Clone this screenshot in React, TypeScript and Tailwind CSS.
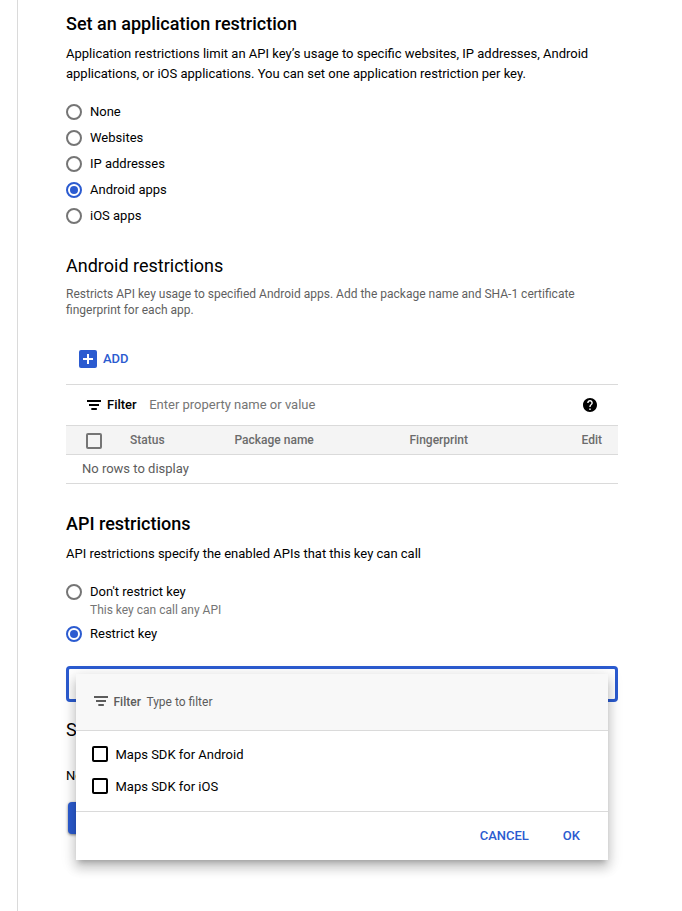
import React from 'react';

function Radio({ label, checked = false }: { label: string; checked?: boolean }) {
  return (
    <label className="flex h-[26px] items-center">
      <span
        className={
          checked
            ? 'flex h-4 w-4 items-center justify-center rounded-full border-2 border-[#2b5bd0]'
            : 'h-4 w-4 rounded-full border-2 border-[#757575]'
        }
      >
        {checked && <span className="h-2 w-2 rounded-full bg-[#2b5bd0]" />}
      </span>
      <span className="ml-2 text-[13px] leading-5">{label}</span>
    </label>
  );
}

function FilterIcon({ className }: { className: string }) {
  return (
    <svg viewBox="0 0 14 10" className={className} fill="currentColor">
      <rect x="0" y="0" width="14" height="2" />
      <rect x="2" y="4" width="10" height="2" />
      <rect x="4.33" y="8" width="5.5" height="2" />
    </svg>
  );
}

function HelpIcon() {
  return (
    <svg viewBox="2 2 20 20" className="h-3.5 w-3.5" fill="#000">
      <path d="M12 2C6.48 2 2 6.48 2 12s4.48 10 10 10 10-4.48 10-10S17.520 2 12 2zm1 17h-2v-2h2v2zm2.070-7.750-.9.920C13.450 12.900 13 13.500 13 15h-2v-.5c0-1.100.450-2.100 1.170-2.830l1.240-1.260c.370-.360.590-.860.590-1.410 0-1.100-.9-2-2-2s-2 .9-2 2H8c0-2.210 1.790-4 4-4s4 1.790 4 4c0 .880-.360 1.680-.930 2.250z" />
    </svg>
  );
}

function ApiMenu() {
  return (
    <div className="absolute left-[7px] top-[5px] w-[532px] bg-white shadow-[0_5px_5px_-3px_rgba(0,0,0,0.2),0_8px_10px_1px_rgba(0,0,0,0.14),0_3px_14px_2px_rgba(0,0,0,0.12)]">
      <div className="flex h-[57px] items-center border-b border-[#dadada] bg-[#f8f8f8] pl-[18px] text-xs text-[#5c5c5c]">
        <FilterIcon className="mb-0.5 h-2.5 w-3.5" />
        <span className="ml-[5.5px] font-medium">Filter</span>
        <span className="ml-[5.5px]">Type to filter</span>
      </div>
      <div className="flex h-[81px] flex-col border-b border-[#dadada] pt-2">
        {['Maps SDK for Android', 'Maps SDK for iOS'].map((name) => (
          <label key={name} className="flex h-8 items-center pl-4">
            <span className="mb-0.5 h-4 w-4 rounded-[2px] border-2 border-black" />
            <span className="ml-[7.5px] text-[13px] leading-5">{name}</span>
          </label>
        ))}
      </div>
      <div className="flex h-12 items-center justify-end pr-7 text-[13px] font-medium text-[#2b5bd0]">
        <button>CANCEL</button>
        <button className="ml-[34px]">OK</button>
      </div>
    </div>
  );
}

export default function App() {
  return (
    <div className="h-[911px] w-[682px] overflow-hidden bg-white pl-[17px] font-['Roboto',sans-serif] text-black">
      <main className="h-full border-l border-[#dadada] pl-12 pt-3">
        <div className="w-[552px]">
          <h2 className="text-lg font-medium leading-6">Set an application restriction</h2>
          <p className="mt-2 text-[13px] leading-5">
            Application restrictions limit an API key’s usage to specific websites, IP addresses, Android
            <br />
            applications, or iOS applications. You can set one application restriction per key.
          </p>
          <div className="mt-[15px]">
            <Radio label="None" />
            <Radio label="Websites" />
            <Radio label="IP addresses" />
            <Radio label="Android apps" checked />
            <Radio label="iOS apps" />
          </div>

          <h3 className="mt-[25px] text-lg font-normal leading-6">Android restrictions</h3>
          <p className="mt-2 text-xs leading-4 text-[#5f5f5f]">
            Restricts API key usage to specified Android apps. Add the package name and SHA-1 certificate
            <br />
            fingerprint for each app.
          </p>
          <button className="ml-[13px] mt-8 flex h-[18px] items-center text-[#2b5bd0]">
            <svg viewBox="0 0 18 18" className="h-[18px] w-[18px]">
              <rect width="18" height="18" rx="2" fill="#2b5bd0" />
              <path d="M4 9h10M9 4v10" stroke="#fff" strokeWidth="2" />
            </svg>
            <span className="ml-1.5 text-[13px] font-medium">ADD</span>
          </button>

          <section className="mt-4 border-b border-t border-[#dadada]">
            <div className="flex h-10 items-center pl-[21px] pr-[21px] text-[13px]">
              <FilterIcon className="h-2.5 w-3.5" />
              <span className="ml-1.5 font-medium">Filter</span>
              <span className="ml-[12.5px] flex-1 text-[#757575]">Enter property name or value</span>
              <HelpIcon />
            </div>
            <div className="flex h-[30px] items-center border-b border-t border-[#dadada] bg-[#f4f4f4] pl-5 text-xs font-medium text-[#6b6b6b]">
              <span className="mt-px h-4 w-4 rounded-[2px] border-2 border-[#757575]" />
              <span className="ml-7 w-[104.5px]">Status</span>
              <span className="w-[175px]">Package name</span>
              <span className="flex-1">Fingerprint</span>
              <span className="mr-4">Edit</span>
            </div>
            <div className="flex h-7 items-center pl-4 text-[13px] text-[#5c5c5c]">No rows to display</div>
          </section>

          <h2 className="mt-7 text-lg font-medium leading-6">API restrictions</h2>
          <p className="mt-2 text-[13px] leading-5">API restrictions specify the enabled APIs that this key can call</p>
          <div className="mt-[15px]">
            <Radio label="Don't restrict key" />
            <p className="-mt-[3px] ml-6 text-xs leading-4 text-[#757575]">This key can call any API</p>
            <div className="mt-[3px]">
              <Radio label="Restrict key" checked />
            </div>
          </div>

          <div className="relative z-10 mt-[19px] h-9 rounded border-[3px] border-[#2b5bd0]">
            <ApiMenu />
          </div>
          <h3 className="mt-4 text-lg font-normal leading-6">S</h3>
          <p className="mt-6 text-[13px] leading-5">No</p>
          <button aria-label="Save" className="ml-0.5 mt-4 block h-8 w-16 rounded bg-[#2b5bd0] shadow-[0_1px_3px_rgba(0,0,0,0.5)]" />
        </div>
      </main>
    </div>
  );
}
